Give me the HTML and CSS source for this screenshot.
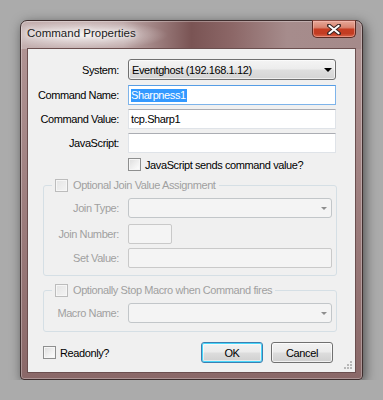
FILE: index.html
```html
<!DOCTYPE html>
<html lang="en">
<head>
    <meta charset="UTF-8">
    <title>Command Properties</title>
    <link rel="stylesheet" href="styles.css">
</head>
<body>
<div class="desk">
    <div class="window">
        <div class="titlebar">
            <span class="title">Command Properties</span>
            <div class="close">
                <svg width="14" height="11" viewBox="0 0 14 11">
                    <path d="M2 1.5 L12 9.5 M12 1.5 L2 9.5" stroke="#3a2624" stroke-width="4" stroke-linecap="round"/>
                    <path d="M2.3 1.8 L11.7 9.2 M11.7 1.8 L2.3 9.2" stroke="#ffffff" stroke-width="2" stroke-linecap="round"/>
                </svg>
            </div>
        </div>

        <div class="client">
            <div class="row row-combo">
                <span class="lbl">System:</span>
                <div class="combo">
                    <span>Eventghost (192.168.1.12)</span>
                    <span class="arrow"></span>
                </div>
            </div>
            <div class="row">
                <span class="lbl">Command Name:</span>
                <div class="textbox focused"><span class="selected">Sharpness1</span></div>
            </div>
            <div class="row">
                <span class="lbl">Command Value:</span>
                <div class="textbox">tcp.Sharp1</div>
            </div>
            <div class="row">
                <span class="lbl">JavaScript:</span>
                <div class="textbox"></div>
            </div>
            <div class="check-row">
                <span class="checkbox"></span>
                <span>JavaScript sends command value?</span>
            </div>

            <fieldset class="group group-join">
                <legend>
                    <span class="checkbox disabled"></span>
                    <span>Optional Join Value Assignment</span>
                </legend>
                <div class="grow grow-first">
                    <span class="lbl">Join Type:</span>
                    <div class="combo disabled"><span></span><span class="arrow"></span></div>
                </div>
                <div class="grow grow-mid">
                    <span class="lbl">Join Number:</span>
                    <div class="textbox disabled short"></div>
                </div>
                <div class="grow">
                    <span class="lbl">Set Value:</span>
                    <div class="textbox disabled"></div>
                </div>
            </fieldset>

            <fieldset class="group group-macro">
                <legend>
                    <span class="checkbox disabled"></span>
                    <span>Optionally Stop Macro when Command fires</span>
                </legend>
                <div class="grow">
                    <span class="lbl">Macro Name:</span>
                    <div class="combo disabled"><span></span><span class="arrow"></span></div>
                </div>
            </fieldset>

            <div class="footer">
                <div class="readonly">
                    <span class="checkbox"></span>
                    <span>Readonly?</span>
                </div>
                <div class="buttons">
                    <button class="btn default">OK</button>
                    <button class="btn">Cancel</button>
                </div>
            </div>

            <svg class="grip" width="10" height="10" viewBox="0 0 10 10">
                <g fill="#b8b8b8">
                    <rect x="7" y="1" width="2" height="2"/>
                    <rect x="4" y="4" width="2" height="2"/>
                    <rect x="7" y="4" width="2" height="2"/>
                    <rect x="1" y="7" width="2" height="2"/>
                    <rect x="4" y="7" width="2" height="2"/>
                    <rect x="7" y="7" width="2" height="2"/>
                </g>
            </svg>
        </div>
    </div>
</div>
</body>
</html>
```

FILE: styles.css
```css
body {
    margin: 0;
    background: #ababab;
    font-family: "Liberation Sans", Arial, sans-serif;
    font-size: 11px;
    letter-spacing: -0.4px;
    color: #000;
}
.desk {
    padding: 20px 0 0 20px;
}
.window {
    width: 343px;
    height: 360px;
    box-sizing: border-box;
    border: 1px solid #3e2e2e;
    border-radius: 7px 7px 4px 4px;
    padding: 0 6px 6px;
    display: flex;
    flex-direction: column;
    background:
        radial-gradient(ellipse 85px 15px at 62px 14px, rgba(255, 255, 255, 0.8), rgba(255, 255, 255, 0)),
        linear-gradient(to right, #c4b0b0 0%, #bea8a8 30%, #7a5454 50%, #8c6767 62%, #a68c8c 78%, #a58a8a 100%) top / 100% 28px no-repeat,
        linear-gradient(to bottom, #b39797 0%, #9a7a7a 60%, #8a6868 100%);
    box-shadow: inset 0 0 0 1px rgba(255, 255, 255, 0.3), 2px 3px 12px rgba(0, 0, 0, 0.55);
}
.titlebar {
    height: 27px;
    flex-shrink: 0;
    display: flex;
    justify-content: space-between;
    align-items: flex-start;
}
.title {
    padding-top: 5px;
    font-size: 11.5px;
    line-height: 14px;
    letter-spacing: 0;
    color: #1b1b1b;
    text-shadow: 0 0 5px #fff, 0 0 9px rgba(255, 255, 255, 0.9);
}
.close {
    width: 44px;
    height: 18px;
    margin-top: -1px;
    box-sizing: border-box;
    border: 1px solid #5a2a22;
    border-top-color: #8a4a40;
    border-radius: 0 0 5px 5px;
    background: linear-gradient(to bottom, #e6a898 0%, #d98470 40%, #c63d22 52%, #c23c22 78%, #d8664c 100%);
    box-shadow: inset 0 0 0 1px rgba(255, 200, 190, 0.45);
    display: flex;
    align-items: center;
    justify-content: center;
}
.client {
    flex: 1;
    position: relative;
    box-sizing: border-box;
    background: #f0f0f0;
    border: 1px solid #6b4f4f;
    padding-top: 10px;
}

/* form rows */
.row {
    display: flex;
    align-items: center;
    gap: 9px;
    height: 20px;
    margin-bottom: 4px;
}
.row-combo {
    height: 21px;
    margin-bottom: 5px;
}
.lbl {
    width: 91px;
    flex-shrink: 0;
    text-align: right;
}
.combo {
    width: 208px;
    height: 100%;
    box-sizing: border-box;
    border: 1px solid #707070;
    border-radius: 3px;
    padding: 0 3px 0 3px;
    display: flex;
    align-items: center;
    justify-content: space-between;
    background: linear-gradient(to bottom, #f4f4f4 0%, #ececec 48%, #dedede 52%, #d4d4d4 100%);
    box-shadow: inset 0 0 0 1px rgba(255, 255, 255, 0.6);
}
.arrow {
    width: 0;
    height: 0;
    border-left: 4px solid transparent;
    border-right: 4px solid transparent;
    border-top: 4px solid #000;
}
.textbox {
    width: 208px;
    height: 100%;
    box-sizing: border-box;
    background: #fff;
    border: 1px solid #dfe3e8;
    border-top-color: #abadb3;
    padding-left: 2px;
    display: flex;
    align-items: center;
}
.textbox.focused {
    border-color: #7eb4ea;
    border-top-color: #569de5;
}
.selected {
    background: #3399ff;
    color: #fff;
    line-height: 13px;
    padding-right: 1px;
}
.check-row {
    display: flex;
    align-items: center;
    gap: 4px;
    height: 13px;
    margin: 5px 0 0 100px;
}
.checkbox {
    width: 13px;
    height: 13px;
    box-sizing: border-box;
    flex-shrink: 0;
    border: 1px solid #8e8f8f;
    background: linear-gradient(135deg, #dcdcdc 0%, #f2f2f2 60%, #ffffff 100%);
    box-shadow: inset 0 0 0 1px #f6f6f6;
}
.checkbox.disabled {
    border-color: #bcbcbc;
    background: linear-gradient(135deg, #e4e4e4 0%, #f4f4f4 100%);
}

/* group boxes */
.group {
    width: 294px;
    box-sizing: border-box;
    min-width: 0;
    margin: 7px 0 0 15px;
    padding: 6px 4px 7px 0;
    border: 1px solid #d5dfe5;
    border-radius: 3px;
    color: #a0a0a0;
}
.group-macro {
    padding-bottom: 8px;
}
.group legend {
    margin-left: 8px;
    padding: 0 3px;
    height: 14px;
    line-height: 14px;
    display: flex;
    align-items: center;
    gap: 5px;
}
.grow {
    display: flex;
    align-items: center;
    gap: 9px;
    height: 20px;
}
.grow-first {
    margin-bottom: 6px;
}
.grow-mid {
    margin-bottom: 4px;
}
.grow .lbl {
    width: 75px;
}
.combo.disabled {
    width: 204px;
    border-color: #c2c6c9;
    background: #f4f4f4;
    box-shadow: none;
    padding-right: 4px;
}
.combo.disabled .arrow {
    border-left-width: 3px;
    border-right-width: 3px;
    border-top: 3px solid #8e8e8e;
}
.textbox.disabled {
    width: 204px;
    background: #f4f4f4;
    border: 1px solid #c9c9c9;
    border-radius: 2px;
}
.textbox.short {
    width: 44px;
}

/* footer */
.footer {
    display: flex;
    align-items: center;
    justify-content: space-between;
    height: 21px;
    margin-top: 10px;
    padding: 0 22px 0 15px;
}
.readonly {
    display: flex;
    align-items: center;
    gap: 4px;
}
.buttons {
    display: flex;
    gap: 8px;
}
.btn {
    width: 62px;
    height: 21px;
    padding: 0;
    font-family: inherit;
    font-size: 11px;
    letter-spacing: -0.4px;
    color: #000;
    border: 1px solid #707070;
    border-radius: 3px;
    background: linear-gradient(to bottom, #f2f2f2 0%, #ebebeb 48%, #dddddd 52%, #cfcfcf 100%);
    box-shadow: inset 0 0 0 1px rgba(255, 255, 255, 0.7);
}
.btn.default {
    border-color: #3c7fb1;
    background: linear-gradient(to bottom, #eaf6fd 0%, #d9f0fc 48%, #bee6fd 52%, #a7d9f5 100%);
    background: linear-gradient(to bottom, #f2f2f2 0%, #ebebeb 48%, #dddddd 52%, #cfcfcf 100%);
    box-shadow: inset 0 0 0 1px #48d6fa, inset 0 0 0 2px rgba(255, 255, 255, 0.5);
}
.grip {
    position: absolute;
    right: 2px;
    bottom: 2px;
}
```
